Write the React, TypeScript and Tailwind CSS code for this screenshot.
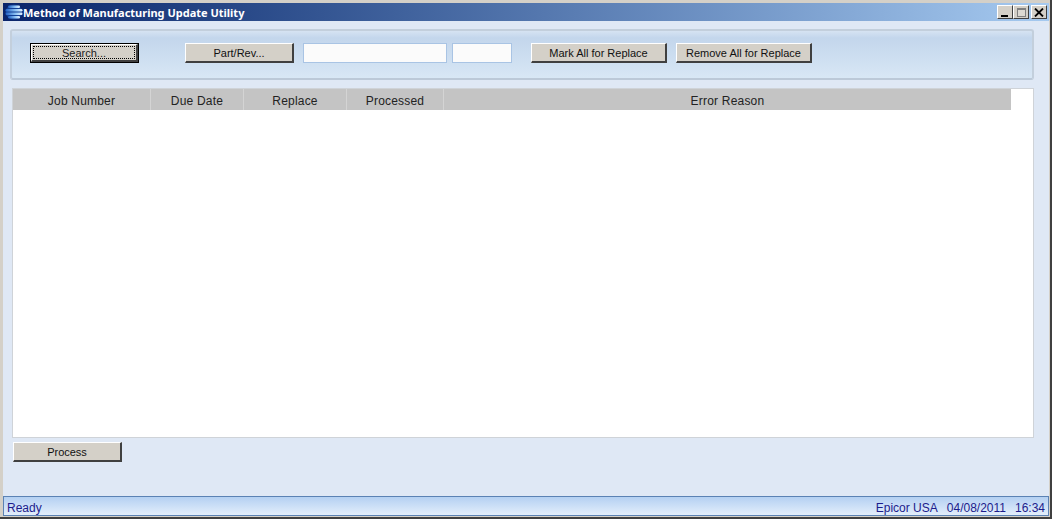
const columns = [
  { label: "Job Number", width: "w-[138px]" },
  { label: "Due Date", width: "w-[93px]" },
  { label: "Replace", width: "w-[103px]" },
  { label: "Processed", width: "w-[97px]" },
  { label: "Error Reason", width: "w-[567px]" },
];

function WinButton({ label, width, focused }: { label: string; width: string; focused?: boolean }) {
  if (focused) {
    return (
      <button className={`${width} h-[20px] border border-black bg-[#d4d0c8] p-0`}>
        <span className="flex h-full w-full items-center justify-center border-b-2 border-r-2 border-[#404040] border-l border-t border-l-white border-t-white p-px">
          <span className="flex h-full w-full items-center justify-center border border-dotted border-black pt-[2px] text-[11px] leading-none text-[#222]">
            {label}
          </span>
        </span>
      </button>
    );
  }
  return (
    <button className={`${width} h-[20px] border-b-2 border-r-2 border-l border-t border-[#404040] border-l-white border-t-white bg-[#d4d0c8] p-0 pt-[2px] text-[11px] leading-none text-[#111]`}>
      {label}
    </button>
  );
}

function CaptionButton({ children, ml }: { children: React.ReactNode; ml: string }) {
  return (
    <div className={`${ml} flex h-[14px] w-[16px] items-center justify-center border-b border-r border-[#404040] border-l border-t border-l-white border-t-white bg-[#d4d0c8]`}>
      {children}
    </div>
  );
}

export default function App() {
  return (
    <div className="h-[519px] w-[1052px] overflow-hidden border-b-2 border-r-2 border-[#404040] bg-[#d4d0c8] font-['Liberation_Sans',sans-serif]">
      <div className="flex h-[516px] w-[1050px] flex-col pl-[3px] pr-[1px] pt-[3px]">
        {/* Title bar */}
        <div className="flex h-[18px] w-[1046px] shrink-0 items-center bg-gradient-to-r from-[#0a246a] to-[#a6caf0] pl-[2px] pr-[2px]">
          <svg width="18" height="16" viewBox="0 0 18 16" className="shrink-0">
            <defs>
              <linearGradient id="band" x1="0" y1="0" x2="1" y2="0">
                <stop offset="0" stopColor="#1f5fc4" />
                <stop offset="0.6" stopColor="#8fc4f5" />
                <stop offset="1" stopColor="#e6f3ff" />
              </linearGradient>
            </defs>
            <ellipse cx="9" cy="8" rx="8.5" ry="7.5" fill="#123f94" />
            <rect x="3" y="1.5" width="12" height="2.5" rx="1.2" fill="url(#band)" />
            <rect x="0.5" y="5" width="17" height="2.5" rx="1.2" fill="url(#band)" />
            <rect x="0.5" y="8.5" width="17" height="2.5" rx="1.2" fill="url(#band)" />
            <rect x="3" y="12" width="12" height="2.5" rx="1.2" fill="url(#band)" />
          </svg>
          <span className="whitespace-nowrap font-['Noto_Sans',sans-serif] text-[11px] font-bold leading-none text-white">
            Method of Manufacturing Update Utility
          </span>
          <CaptionButton ml="ml-auto">
            <span className="mt-[7px] mr-[1px] h-[2px] w-[7px] bg-black" />
          </CaptionButton>
          <CaptionButton ml="ml-0">
            <span className="h-[9px] w-[9px] border border-t-2 border-[#808080] bg-[#dcd9d2]" />
          </CaptionButton>
          <CaptionButton ml="ml-[2px]">
            <svg width="10" height="9" viewBox="0 0 10 9">
              <path d="M1 0.5 L9 8.5 M9 0.5 L1 8.5" stroke="#000" strokeWidth="1.8" />
            </svg>
          </CaptionButton>
        </div>

        {/* Body */}
        <div className="flex w-[1046px] flex-1 flex-col bg-[#dfe8f5] pl-[7px] pr-[12px] pt-[8px]">
          {/* Toolbar panel */}
          <div className="flex h-[51px] w-[1024px] shrink-0 items-center rounded-[3px] border-2 border-[#c3cfdc] border-b-[#bcc9d8] bg-gradient-to-b from-[#d6e3f2] via-[#c3d6ec] via-[15%] to-[#d8e7f5] pb-[3px] pl-[18px]">
            <WinButton label="Search..." width="w-[109px]" focused />
            <div className="w-[46px]" />
            <WinButton label="Part/Rev..." width="w-[109px]" />
            <input className="ml-[9px] h-[20px] w-[144px] border border-[#a9c4e4] bg-[#fbfbfb]" />
            <input className="ml-[5px] h-[20px] w-[60px] border border-[#a9c4e4] bg-[#fbfbfb]" />
            <div className="ml-[19px] flex">
              <WinButton label="Mark All for Replace" width="w-[136px]" />
            </div>
            <div className="ml-[9px] flex">
              <WinButton label="Remove All for Replace" width="w-[136px]" />
            </div>
          </div>

          {/* Grid */}
          <div className="ml-[2px] mt-[8px] h-[350px] w-[1022px] shrink-0 border border-[#cfd3d8] bg-white">
            <div className="flex h-[21px] w-[998px] bg-[#c4c4c4]">
              {columns.map((col, i) => (
                <div
                  key={col.label}
                  className={`${col.width} flex items-center justify-center pt-[2px] text-[12px] leading-none tracking-[0.2px] text-[#222] ${i < columns.length - 1 ? "border-r border-[#d4d4d4]" : ""}`}
                >
                  {col.label}
                </div>
              ))}
            </div>
          </div>

          <div className="ml-[3px] mt-[4px] flex">
            <WinButton label="Process" width="w-[109px]" />
          </div>
        </div>

        {/* Status bar */}
        <div className="flex h-[20px] w-[1046px] shrink-0 items-center justify-between border border-[#5b82b4] bg-gradient-to-b from-[#b4d0f2] to-[#e3eefb] px-[3px] pt-[3px] text-[12px] leading-none text-[#1c1c8c]">
          <span>Ready</span>
          <div className="flex">
            <span>Epicor USA</span>
            <span className="ml-[9px]">04/08/2011</span>
            <span className="ml-[9px]">16:34</span>
          </div>
        </div>
      </div>
    </div>
  );
}
